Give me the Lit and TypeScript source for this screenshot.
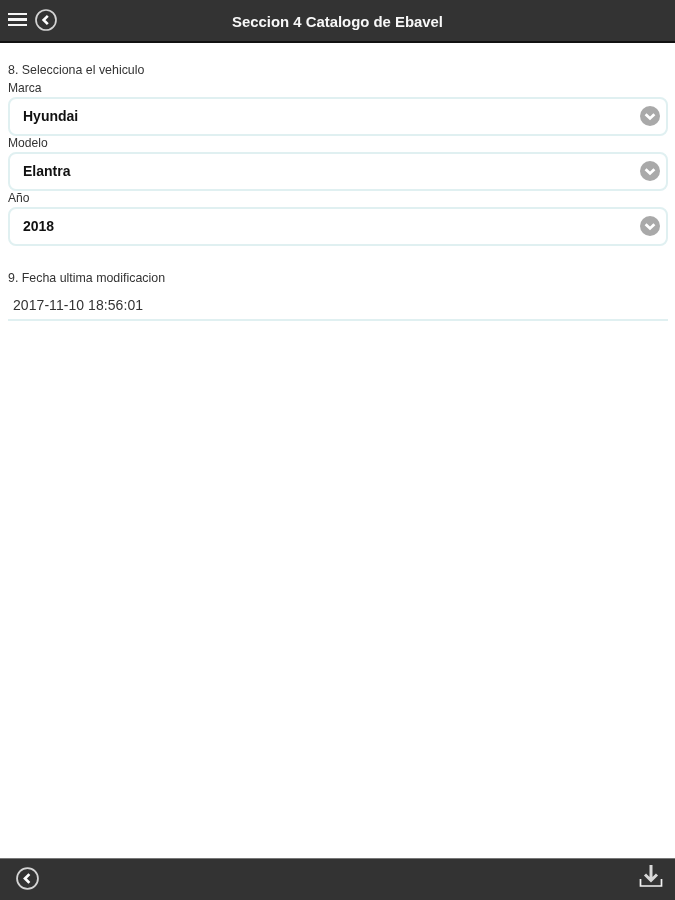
import { LitElement, css, html } from "lit";
import { customElement } from "lit/decorators.js";

const backIcon = (size: number) => html`
  <svg width=${size} height=${size} viewBox="0 0 22 22" aria-hidden="true">
    <circle cx="11" cy="11" r="10" fill="none" stroke="#d4d4d4" stroke-width="1.7" />
    <path d="M12.8 6.8 8.6 11l4.2 4.2" fill="none" stroke="#fff" stroke-width="2.6" />
  </svg>
`;

@customElement("app-root")
export class AppRoot extends LitElement {
  static styles = css`
    :host {
      display: flex;
      flex-direction: column;
      height: 900px;
      background: #fff;
      font-family: "Liberation Sans", Arial, sans-serif;
      color: #222;
      /* the reference is an upscaled capture, everything is a little soft */
      filter: blur(0.5px);
    }
    .topbar {
      flex: none;
      box-sizing: border-box;
      height: 43px;
      display: grid;
      grid-template-columns: 1fr auto 1fr;
      align-items: center;
      background: #333;
      border-bottom: 2px solid #111;
      padding: 0 8px;
    }
    .nav {
      display: flex;
      align-items: center;
      gap: 8px;
      margin-bottom: 2px;
    }
    .menu {
      display: flex;
      flex-direction: column;
      gap: 3px;
      width: 19px;
    }
    .menu span {
      display: block;
      height: 2.5px;
      background: #f6f6f6;
    }
    .back {
      display: flex;
    }
    .title {
      font-size: 14.9px;
      line-height: 18px;
      font-weight: 700;
      color: #f8f8f8;
      margin-top: 2px;
    }
    .content {
      flex: 1;
      padding: 20px 7px 0 8px;
      display: flex;
      flex-direction: column;
    }
    .question {
      font-size: 12.4px;
      line-height: 14px;
      color: #333;
      margin-bottom: 4px;
    }
    .label {
      font-size: 12.1px;
      line-height: 14px;
      color: #333;
    }
    .select {
      box-sizing: border-box;
      height: 39.5px;
      margin-top: 1.5px;
      border: 2px solid #e0f0f1;
      border-radius: 8px;
      display: flex;
      align-items: center;
      justify-content: space-between;
      padding: 0 6px 0 13px;
      font-size: 14px;
      font-weight: 700;
      color: #111;
    }
    .chevron {
      display: flex;
    }
    .date-question {
      margin-top: 24.5px;
      margin-bottom: 0;
    }
    .date {
      box-sizing: border-box;
      height: 36.5px;
      padding: 12.5px 0 0 5px;
      font-size: 14px;
      line-height: 16px;
      letter-spacing: 0.06px;
      color: #333;
      border-bottom: 2px solid #e0f0f1;
    }
    .bottombar {
      flex: none;
      box-sizing: border-box;
      height: 42px;
      display: flex;
      align-items: center;
      justify-content: space-between;
      background: #333;
      border-top: 1px solid #777;
      padding: 0 12px 2px 15.5px;
    }
    .download {
      margin-bottom: 6px;
    }
  `;

  private renderSelect(label: string, value: string) {
    return html`
      <div class="label">${label}</div>
      <div class="select">
        <span>${value}</span>
        <span class="chevron">
          <svg width="20" height="20" viewBox="0 0 20 20" aria-hidden="true">
            <circle cx="10" cy="10" r="10" fill="#a9a9a9" />
            <path d="M5.6 8.2 10 12.4l4.4-4.2" fill="none" stroke="#fff" stroke-width="2.8" />
          </svg>
        </span>
      </div>
    `;
  }

  render() {
    return html`
      <header class="topbar">
        <div class="nav">
          <div class="menu"><span></span><span></span><span></span></div>
          <div class="back">${backIcon(22)}</div>
        </div>
        <div class="title">Seccion 4 Catalogo de Ebavel</div>
      </header>
      <main class="content">
        <div class="question">8. Selecciona el vehiculo</div>
        ${this.renderSelect("Marca", "Hyundai")}
        ${this.renderSelect("Modelo", "Elantra")}
        ${this.renderSelect("Año", "2018")}
        <div class="question date-question">9. Fecha ultima modificacion</div>
        <div class="date">2017-11-10 18:56:01</div>
      </main>
      <footer class="bottombar">
        <div class="back">${backIcon(23)}</div>
        <svg class="download" width="24" height="24" viewBox="0 0 24 24" aria-hidden="true">
          <path d="M12 1v15M6 10.5l6 6 6-6" fill="none" stroke="#d8d8d8" stroke-width="3" />
          <path d="M1.5 15v7h21v-7" fill="none" stroke="#f2f2f2" stroke-width="1.7" />
        </svg>
      </footer>
    `;
  }
}
